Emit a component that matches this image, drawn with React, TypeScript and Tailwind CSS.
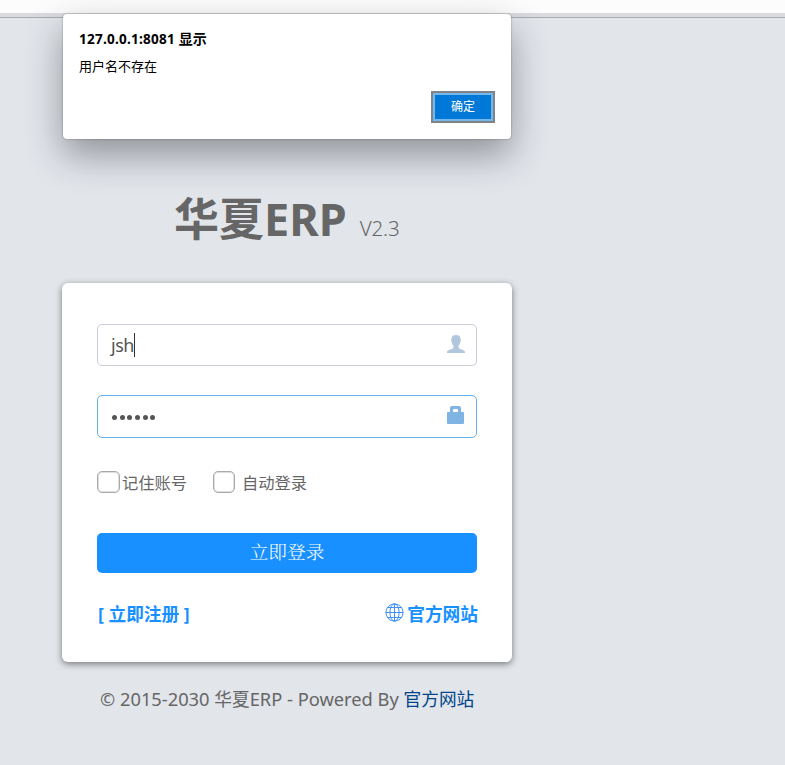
import React from "react";

function UserIcon() {
  return (
    <svg width="18" height="18" viewBox="0 0 18 18" fill="#b1c7dd">
      <path d="M9 0C6 0 4.500 1.600 4.500 4.200c-.5.300-.5 2.600.3 3 .2 1.500.7 2.600 1.600 3.500v2C6.400 14 0 14.600 0 16.900V18h18v-1.100c0-2.300-6.400-2.900-6.400-4.200v-2c.9-.9 1.400-2 1.600-3.500.8-.4.8-2.700.3-3C13.500 1.600 12 0 9 0Z" />
    </svg>
  );
}

function LockIcon() {
  return (
    <svg width="17" height="18" viewBox="0 0 17 18" fill="#7fb4e4">
      <path
        fillRule="evenodd"
        d="M3 6V2Q3 0 5 0h7q2 0 2 2v4h2q1 0 1 1v10q0 1-1 1H1q-1 0-1-1V7q0-1 1-1ZM6 6h5V4q0-1-1-1H7Q6 3 6 4Z"
      />
    </svg>
  );
}

function GlobeIcon() {
  return (
    <svg width="19" height="19" viewBox="0 0 19 19" fill="none" stroke="#3f8ff5" strokeWidth="1">
      <circle cx="9.500" cy="9.500" r="8.600" />
      <ellipse cx="9.500" cy="9.500" rx="4.600" ry="8.600" />
      <path d="M9.500 1v17M1 9.500h17M2.500 4.500h14M2.500 14.500h14" />
    </svg>
  );
}

function Alert() {
  return (
    <div className="absolute left-[63px] top-[14px] flex h-[125px] w-[448px] flex-col rounded-[4px] bg-white px-4 pt-[15px] text-[13px] text-black shadow-[0_0_2px_rgba(0,0,0,0.4),0_16px_36px_rgba(30,36,42,0.42)]">
      <div className="h-[20px] whitespace-nowrap font-bold leading-[20px]">
        <span className="text-[13.500px] tracking-[0.25px]">127.0.0.1:8081 </span>
        <span className="text-[14px]">显示</span>
      </div>
      <div className="mt-[7px] h-[20px] whitespace-nowrap leading-[20px]">用户名不存在</div>
      <button className="mt-[15px] h-8 w-16 self-end border-2 border-[#808489] bg-[#0078d7] p-0 text-[12px] text-white shadow-[inset_0_0_0_2px_#75b6eb]">
        确定
      </button>
    </div>
  );
}

export default function App() {
  return (
    <div className="relative h-[765px] w-[785px] overflow-hidden bg-[#e2e5ea] font-['Noto_Sans','Noto_Sans_CJK_SC',sans-serif] text-[#666]">
      <div className="h-[13px] bg-[#fcfcfc]" />
      <div className="h-[5px] border-b border-[#a9abb0] bg-[#dadbdf]" />
      <main className="ml-[62px] flex w-[450px] flex-col">
        <h1 className="flex h-[265px] items-baseline whitespace-nowrap pl-[112px] pt-[167px] leading-[68px]">
          <span className="text-[45px] font-bold">华夏ERP</span>
          <span className="ml-[13px] text-[20.500px] font-light tracking-[-0.1px]">V2.3</span>
        </h1>
        <form className="flex h-[379px] flex-col rounded-[6px] bg-white px-[35px] pt-[41px] shadow-[0_2px_7px_rgba(0,0,0,0.48)]">
          <div className="flex h-[42px] items-center rounded-[5px] border border-[#c9cbd7] pl-[13px] pr-[11px] text-[18px] text-[#555]">
            <span className="tracking-[-0.5px]">jsh</span>
            <span className="h-6 w-px bg-[#333]" />
            <span className="mb-[3px] ml-auto"><UserIcon /></span>
          </div>
          <div className="mt-[29px] flex h-[43px] items-center rounded-[5px] border border-[#66afe9] pl-[14px] pr-[12px]">
            <div className="mt-[2px] flex gap-[2.700px]">
              {[0, 1, 2, 3, 4, 5].map((i) => (
                <span key={i} className="size-[5px] rounded-full bg-[#555]" />
              ))}
            </div>
            <span className="mb-[3px] ml-auto"><LockIcon /></span>
          </div>
          <div className="mt-[33px] flex h-[23px] items-center whitespace-nowrap text-[16.300px]">
            <span className="mb-px h-[22px] w-[23px] rounded-[5px] border border-[#aaa] shadow-[inset_0_0_0_1px_#dedede]" />
            <span className="ml-[2px] mt-[2px] w-[91px]">记住账号</span>
            <span className="mb-px h-[22px] w-[22px] rounded-[5px] border border-[#aaa] shadow-[inset_0_0_0_1px_#dedede]" />
            <span className="ml-[7px] mt-[2px]">自动登录</span>
          </div>
          <button type="button" className="mt-[39px] h-10 rounded-[5px] bg-[#1890ff] pb-[3px] font-['Noto_Serif_CJK_SC','Noto_Sans_CJK_SC',serif] text-[18.700px] font-light text-white">
            立即登录
          </button>
          <div className="mt-[29px] flex h-[24px] items-center justify-between whitespace-nowrap text-[17.700px] font-bold leading-[24px] text-[#1890ff]">
            <span className="pl-px">[ 立即注册 ]</span>
            <span className="-mr-px flex items-center gap-[3px]">
              <span className="-mt-[3px]"><GlobeIcon /></span>
              <span>官方网站</span>
            </span>
          </div>
        </form>
        <footer className="mt-[24px] whitespace-nowrap pl-[38px] text-[17.700px] leading-[26px]">
          <span className="text-[18.300px]">© 2015-2030 </span>华夏<span className="text-[18.300px]">ERP - Powered By </span>
          <a className="text-[#00458c]">官方网站</a>
        </footer>
      </main>
      <Alert />
    </div>
  );
}
